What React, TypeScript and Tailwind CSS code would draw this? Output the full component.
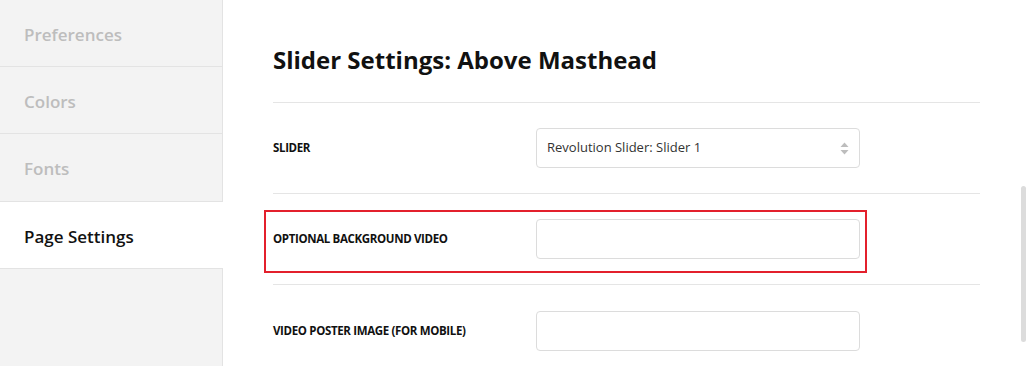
import React from 'react';

const navItems = [
  { label: 'Preferences', active: false },
  { label: 'Colors', active: false },
  { label: 'Fonts', active: false },
  { label: 'Page Settings', active: true },
];

function Sidebar() {
  return (
    <aside className="w-[223px] shrink-0 bg-[#f3f3f3] border-r border-[#e3e3e3]">
      {navItems.map((item, i) => (
        <div
          key={item.label}
          className={`flex items-center pl-6 pt-[3px] border-b border-[#e3e3e3] text-[17px] font-semibold ${
            i === 2 ? 'h-[68px]' : 'h-[67px]'
          } ${item.active ? 'bg-white text-[#111] mr-[-1px]' : 'text-[#bdbdbd]'}`}
        >
          {item.label}
        </div>
      ))}
    </aside>
  );
}

function SelectArrows() {
  return (
    <svg width="9" height="13" viewBox="0 0 9 13" className="text-[#bdbdbd]">
      <path d="M4.5 0.5 L8.5 5 L0.5 5 Z" fill="currentColor" />
      <path d="M4.5 12.5 L8.5 8 L0.5 8 Z" fill="currentColor" />
    </svg>
  );
}

function Label({ children }: { children: React.ReactNode }) {
  return (
    <div className="w-[263px] shrink-0 text-[11.5px] font-bold uppercase text-[#111] tracking-[-0.35px]">
      {children}
    </div>
  );
}

function Row({ label, children, highlight }: { label: string; children: React.ReactNode; highlight?: boolean }) {
  return (
    <div className="relative flex items-center py-[25px] border-b border-[#e5e5e5]">
      {highlight && (
        <div className="absolute left-[-9px] top-[16px] w-[603px] h-[63px] border-2 border-[#e3202c] pointer-events-none" />
      )}
      <Label>{label}</Label>
      {children}
    </div>
  );
}

function TextInput() {
  return <div className="w-[324px] h-[40px] rounded-[4px] border border-[#dcdcdc] bg-white" />;
}

export default function App() {
  return (
    <div
      className="relative flex w-[1027px] h-[366px] overflow-hidden bg-white"
      style={{ fontFamily: '"Open Sans", "Noto Sans", sans-serif' }}
    >
      <Sidebar />
      <main className="flex-1 pl-[50px] pr-[47px]">
        <h1 className="h-[103px] pt-[48px] text-[24px] font-bold text-[#111] leading-none border-b border-[#e5e5e5]">
          Slider Settings: Above Masthead
        </h1>
        <Row label="Slider">
          <div className="w-[324px] h-[40px] rounded-[4px] border border-[#dcdcdc] bg-white flex items-center justify-between pl-[10px] pr-[10px]">
            <span className="text-[13px] text-[#333]">Revolution Slider: Slider 1</span>
            <SelectArrows />
          </div>
        </Row>
        <Row label="Optional Background Video" highlight>
          <TextInput />
        </Row>
        <div className="flex items-center pt-[26px]">
          <Label>Video Poster Image (for mobile)</Label>
          <TextInput />
        </div>
      </main>
      <div className="absolute left-[1021px] top-[186px] w-[5px] h-[156px] rounded-full bg-[#dcdcdc]" />
    </div>
  );
}
